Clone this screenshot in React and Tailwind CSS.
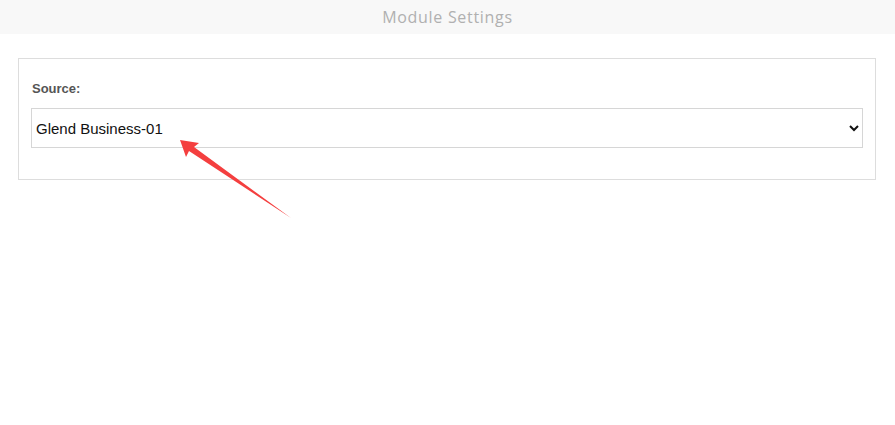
import React from "react";

const App = () => {
  return (
    <div className="relative w-[895px] h-[425px] bg-white overflow-hidden" style={{ fontFamily: '"Liberation Sans", Arial, sans-serif' }}>
      <div className="h-[34px] bg-[#f8f8f8] flex items-center justify-center">
        <span className="text-[16px] text-[#b0b0b0] tracking-[0.7px]" style={{ fontFamily: '"Open Sans", sans-serif' }}>
          Module Settings
        </span>
      </div>
      <div className="px-[18px] pt-[24px]">
        <div className="border border-[#dddddd] w-[858px] h-[122px] px-[12px] pt-[21px]">
          <label className="block pl-[1px] text-[13px] font-bold text-[#555555] leading-[18px] mb-[10px]">
            Source:
          </label>
          <select
            className="block w-[832px] h-[40px] border border-[#d6d6d6] bg-white text-[15px] text-[#111111] pl-0 pr-[6px] outline-none"
            defaultValue="glend"
          >
            <option value="glend">Glend Business-01</option>
          </select>
        </div>
      </div>
      <svg className="absolute left-0 top-0 pointer-events-none" width="895" height="425">
        <polygon
          points="180,140 199,143 194,147 291,218 189,151 186,157"
          fill="#f43f3f"
        />
      </svg>
    </div>
  );
};

export default App;
